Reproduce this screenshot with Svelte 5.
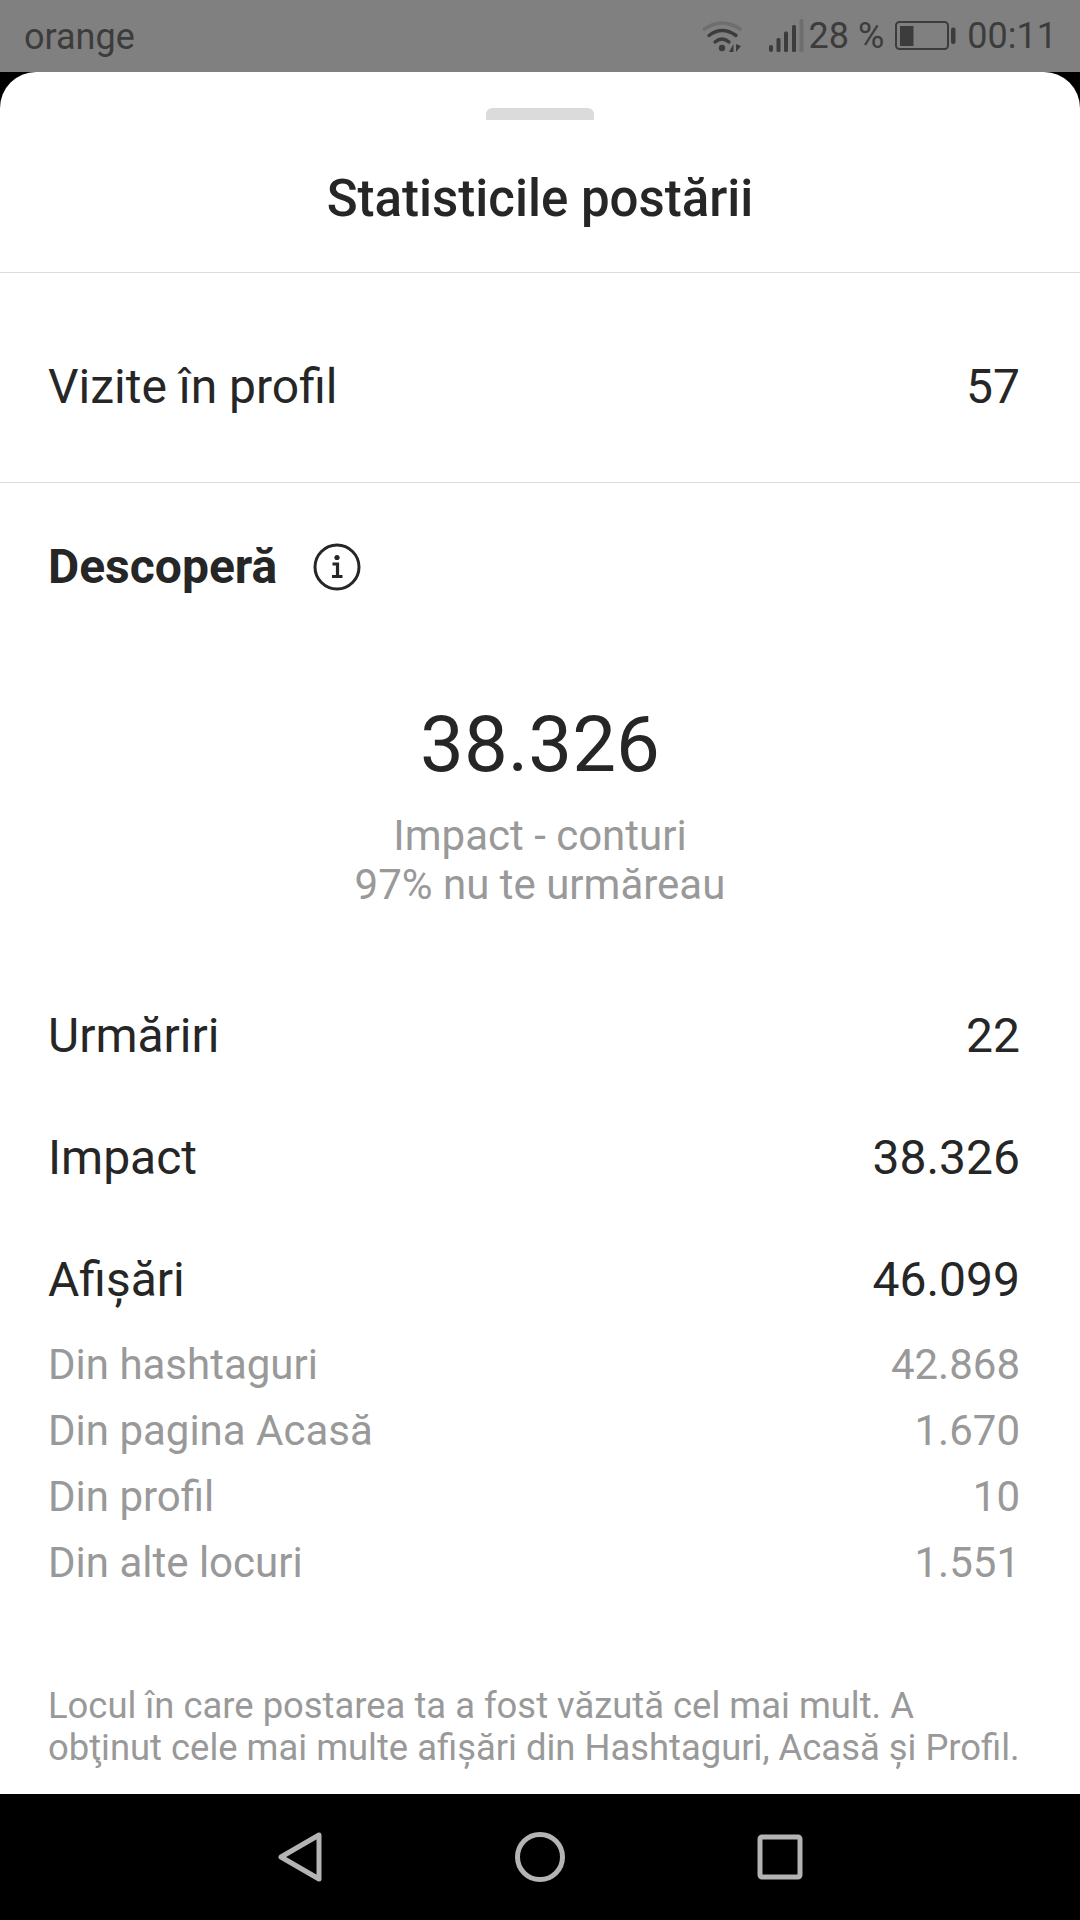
<script lang="ts">
  const mainRows = [
    { label: 'Urmăriri', value: '22' },
    { label: 'Impact', value: '38.326' },
    { label: 'Afișări', value: '46.099' }
  ];
  const subRows = [
    { label: 'Din hashtaguri', value: '42.868' },
    { label: 'Din pagina Acasă', value: '1.670' },
    { label: 'Din profil', value: '10' },
    { label: 'Din alte locuri', value: '1.551' }
  ];
</script>

<div class="screen">
  <div class="status">
    <span class="carrier">orange</span>
    <div class="status-right">
      <svg class="wifi" width="40" height="33" viewBox="0 0 40 33">
        <path d="M1.5 9 Q19 -3 37 9" fill="none" stroke="#6e6e6e" stroke-width="3.4" stroke-linecap="round" />
        <path d="M6 15.5 Q19 5.500 33 15.500" fill="none" stroke="#3c3c3c" stroke-width="3.4" stroke-linecap="round" />
        <path d="M12 22 Q19 16 26 22" fill="none" stroke="#3c3c3c" stroke-width="3.4" stroke-linecap="round" />
        <circle cx="19" cy="28" r="3.200" fill="#3c3c3c" />
        <path d="M26 32 L30.500 24 V32 Z M33 24 V32 L38 26 Z" fill="#3c3c3c" />
      </svg>
      <svg class="signal" width="36" height="34" viewBox="0 0 36 34">
        <rect x="1" y="26" width="4" height="7" rx="2" fill="#3c3c3c" />
        <rect x="8.500" y="19" width="4" height="14" rx="1.500" fill="#3c3c3c" />
        <rect x="16" y="12.500" width="4" height="20.500" rx="1.500" fill="#3c3c3c" />
        <rect x="24" y="6" width="4" height="27" rx="1.500" fill="#3c3c3c" />
        <rect x="31.500" y="0" width="4" height="33" rx="1.500" fill="#6e6e6e" />
      </svg>
      <span class="pct">28 %</span>
      <svg class="battery" width="61" height="30" viewBox="0 0 61 30">
        <rect x="1" y="1" width="52" height="27" rx="3.500" fill="none" stroke="#3c3c3c" stroke-width="2" />
        <rect x="5" y="5" width="13.500" height="20" fill="#3c3c3c" />
        <rect x="56" y="6.500" width="4.500" height="16.500" rx="2" fill="#3c3c3c" />
      </svg>
      <span class="time">00:11</span>
    </div>
  </div>

  <div class="sheet">
    <header class="head">
      <div class="handle"></div>
      <h1>Statisticile postării</h1>
    </header>

    <div class="profile row">
      <span>Vizite în profil</span>
      <span>57</span>
    </div>

    <section class="discover">
      <div class="section-title">
        <h2>Descoperă</h2>
        <svg width="48" height="48" viewBox="0 0 48 48">
          <circle cx="24" cy="24" r="22" fill="none" stroke="#262626" stroke-width="3" />
          <circle cx="24" cy="14.500" r="2.600" fill="#262626" />
          <path d="M19.500 21 H24.500 V33 M19 33.500 H29.500" fill="none" stroke="#262626" stroke-width="3.200" />
        </svg>
      </div>

      <div class="hero">
        <div class="hero-num">38.326</div>
        <div class="hero-sub">Impact - conturi</div>
        <div class="hero-sub">97% nu te urmăreau</div>
      </div>

      <div class="main-rows">
        {#each mainRows as r}
          <div class="row main-row">
            <span>{r.label}</span>
            <span>{r.value}</span>
          </div>
        {/each}
      </div>

      <div class="sub-rows">
        {#each subRows as r}
          <div class="row sub-row">
            <span>{r.label}</span>
            <span>{r.value}</span>
          </div>
        {/each}
      </div>

      <p class="note">Locul în care postarea ta a fost văzută cel mai mult. A<br />obţinut cele mai multe afișări din Hashtaguri, Acasă și Profil.</p>
    </section>
  </div>

  <nav class="nav">
    <svg width="50" height="52" viewBox="0 0 50 52">
      <path d="M44 4 V48 L6 26 Z" fill="none" stroke="#b4b4b4" stroke-width="5" stroke-linejoin="round" />
    </svg>
    <svg width="50" height="52" viewBox="0 0 50 52">
      <circle cx="25" cy="26" r="22.500" fill="none" stroke="#b4b4b4" stroke-width="5" />
    </svg>
    <svg width="50" height="52" viewBox="0 0 50 52">
      <rect x="5" y="6" width="40" height="40" rx="2" fill="none" stroke="#b4b4b4" stroke-width="5" />
    </svg>
  </nav>
</div>

<style>
  :global(body) {
    margin: 0;
    background: #000;
  }
  .screen {
    width: 1080px;
    height: 1920px;
    display: flex;
    flex-direction: column;
    background: #000;
    font-family: Roboto, "Liberation Sans", sans-serif;
    overflow: hidden;
  }
  .status {
    height: 72px;
    flex: none;
    background: #808080;
    color: #3c3c3c;
    font-size: 36px;
    display: flex;
    align-items: center;
    justify-content: space-between;
    padding: 0 23px 0 24px;
    box-sizing: border-box;
  }
  .carrier {
    position: relative;
    top: 1px;
  }
  .status-right {
    display: flex;
    align-items: center;
  }
  .status-right span {
    line-height: 72px;
  }
  .wifi {
    margin-right: 25px;
  }
  .signal {
    margin-right: 5px;
  }
  .pct {
    margin-right: 11px;
  }
  .battery {
    margin-right: 11px;
  }
  .sheet {
    flex: 1;
    background: #fff;
    border-radius: 36px 36px 0 0;
    color: #262626;
    min-height: 0;
  }
  .head {
    height: 201px;
    box-sizing: border-box;
    border-bottom: 1px solid #dbdbdb;
    display: flex;
    flex-direction: column;
    align-items: center;
    padding-top: 36px;
  }
  .handle {
    width: 108px;
    height: 12px;
    background: #dbdbdb;
    border-radius: 6px 6px 0 0;
  }
  h1 {
    margin: 51px 0 0;
    font-size: 51px;
    line-height: 56px;
    font-weight: 500;
  }
  .row {
    display: flex;
    justify-content: space-between;
    align-items: center;
  }
  .profile {
    height: 210px;
    box-sizing: border-box;
    border-bottom: 1px solid #dbdbdb;
    padding: 18px 60px 0 48px;
    font-size: 48px;
  }
  .section-title {
    display: flex;
    align-items: center;
    gap: 36px;
    height: 48px;
    margin-top: 60px;
    padding-left: 48px;
  }
  h2 {
    margin: 0;
    font-size: 48px;
    font-weight: 700;
    line-height: 48px;
  }
  .hero {
    margin-top: 110px;
    text-align: center;
  }
  .hero-num {
    font-size: 78px;
    line-height: 88px;
  }
  .hero-sub {
    font-size: 42px;
    line-height: 49px;
    color: #999;
  }
  .hero-sub:nth-child(2) {
    margin-top: 22px;
  }
  .main-rows {
    margin-top: 65px;
    padding: 0 60px 0 48px;
  }
  .main-row {
    height: 122px;
    font-size: 48px;
  }
  .sub-rows {
    margin-top: -9px;
    padding: 0 60px 0 48px;
  }
  .sub-row {
    height: 66px;
    font-size: 42px;
    color: #999;
  }
  .note {
    margin: 90px 0 0;
    padding-left: 48px;
    font-size: 36.4px;
    line-height: 42px;
    color: #999;
    white-space: nowrap;
  }
  .nav {
    height: 126px;
    flex: none;
    background: #000;
    display: flex;
    align-items: center;
    justify-content: center;
    gap: 190px;
  }
</style>
